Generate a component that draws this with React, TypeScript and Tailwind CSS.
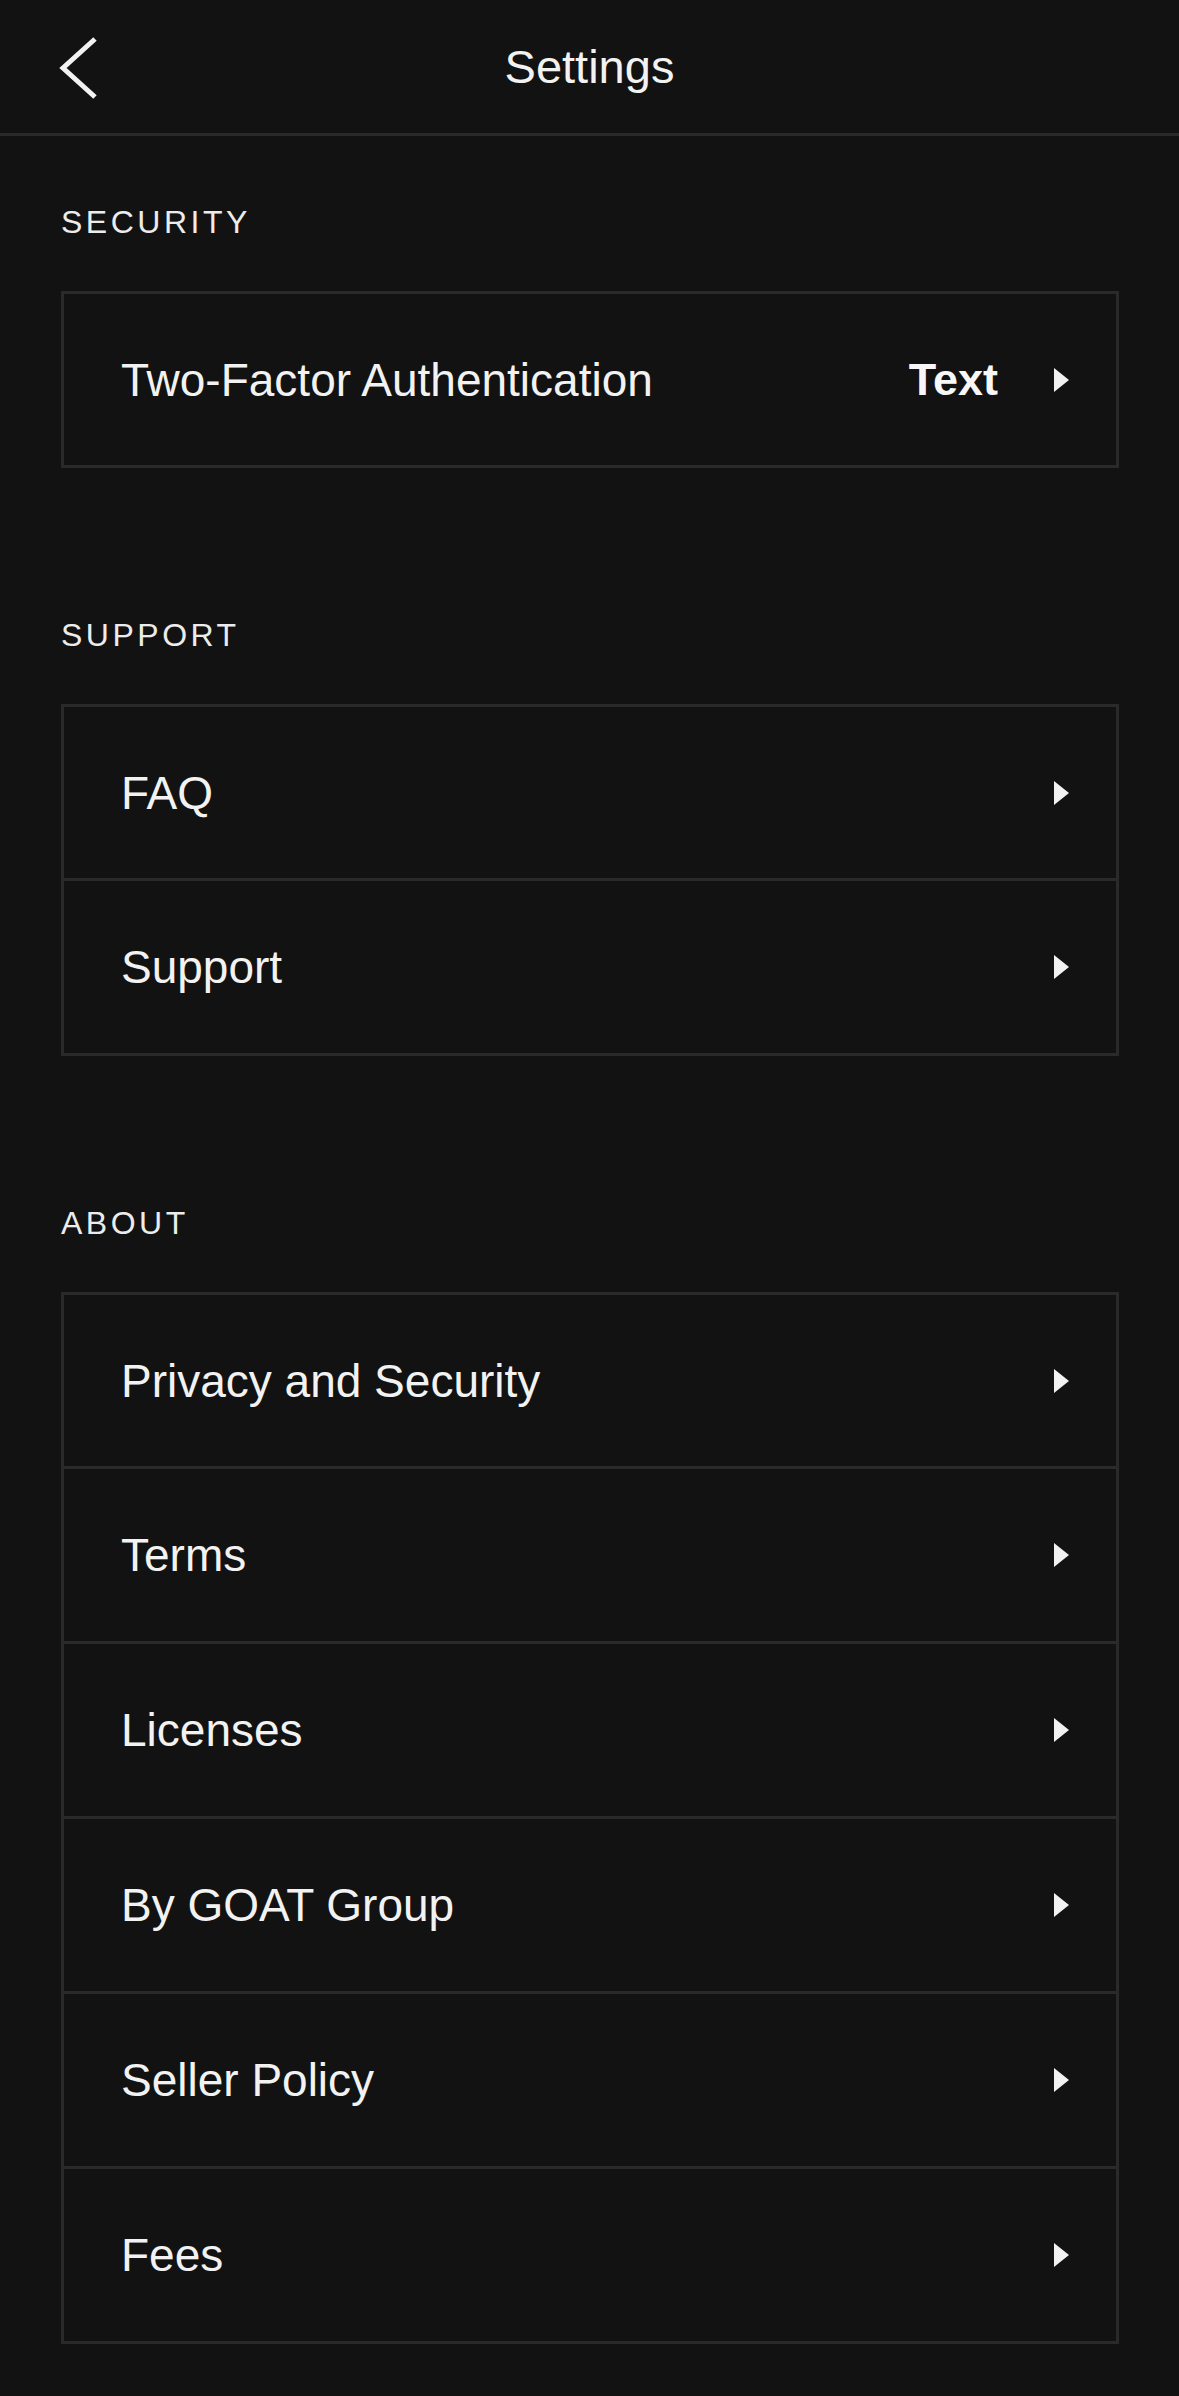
import React from "react";

const font = { fontFamily: '"Liberation Sans", Arial, sans-serif' };

function Triangle() {
  return (
    <svg width="15" height="24" viewBox="0 0 15 24" className="shrink-0">
      <polygon points="0,0 15,12 0,24" fill="#f2f2f2" />
    </svg>
  );
}

function Row({ label, value, first }: { label: string; value?: string; first?: boolean }) {
  return (
    <div
      className={`flex items-center justify-between pl-[57px] pr-[47px] ${
        first ? "h-[171px]" : "h-[175px] border-t-[3px] border-[#2a2a2a]"
      }`}
    >
      <span className="text-[46px] leading-none text-[#f2f2f2]">{label}</span>
      <div className="flex items-center gap-[56px]">
        {value && <span className="text-[45px] font-bold leading-none text-[#f7f7f7]">{value}</span>}
        <Triangle />
      </div>
    </div>
  );
}

function Section({ title, items, top }: { title: string; items: { label: string; value?: string }[]; top: string }) {
  return (
    <section className={top}>
      <h2 className="mb-[53px] text-[32px] font-medium uppercase leading-none tracking-[3.5px] text-[#ececec]">
        {title}
      </h2>
      <div className="border-[3px] border-[#2a2a2a]">
        {items.map((it, i) => (
          <Row key={it.label} label={it.label} value={it.value} first={i === 0} />
        ))}
      </div>
    </section>
  );
}

export default function App() {
  return (
    <div className="min-h-screen w-full bg-[#121212] pb-[51px]" style={font}>
      <header className="grid h-[136px] grid-cols-[1fr_auto_1fr] items-center border-b-[3px] border-[#2a2a2a]">
        <div className="flex items-center pl-[58px]">
          <svg width="42" height="66" viewBox="0 0 42 66" className="mt-[2px]">
            <polyline
              points="37,4 5,33 37,62"
              fill="none"
              stroke="#f2f2f2"
              strokeWidth="5"
              strokeLinejoin="miter"
            />
          </svg>
        </div>
        <h1 className="text-[47px] font-normal leading-none text-[#f2f2f2]">Settings</h1>
        <div />
      </header>
      <main className="pl-[61px] pr-[60px]">
        <Section
          top="pt-[70px]"
          title="Security"
          items={[{ label: "Two-Factor Authentication", value: "Text" }]}
        />
        <Section top="pt-[151px]" title="Support" items={[{ label: "FAQ" }, { label: "Support" }]} />
        <Section
          top="pt-[151px]"
          title="About"
          items={[
            { label: "Privacy and Security" },
            { label: "Terms" },
            { label: "Licenses" },
            { label: "By GOAT Group" },
            { label: "Seller Policy" },
            { label: "Fees" },
          ]}
        />
      </main>
    </div>
  );
}
